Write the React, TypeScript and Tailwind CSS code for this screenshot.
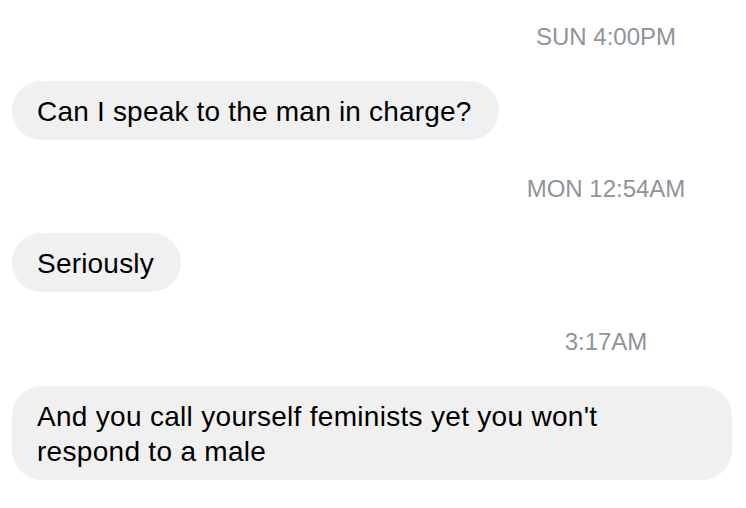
export default function App() {
  const font = { fontFamily: '"Liberation Sans", Arial, Helvetica, sans-serif' };
  const Stamp = ({ t }: { t: string }) => (
    <div className="pl-[466px] text-center text-[24px] leading-[28px] text-[#90949c]">{t}</div>
  );
  const Bubble = ({ children, wide }: { children: React.ReactNode; wide?: boolean }) => (
    <div
      className={
        wide
          ? "ml-[12px] mt-[30px] w-[720px] rounded-[30px] bg-[#f0f0f0] pl-[25px] pr-[27px] pt-[13px] pb-[11px] text-[28px] leading-[35px] tracking-[0.3px] text-black"
          : "ml-[12px] mt-[30px] self-start rounded-[30px] bg-[#f0f0f0] pl-[25px] pr-[27px] pt-[13px] pb-[11px] text-[28px] leading-[35px] tracking-[0.2px] text-black"
      }
    >
      {children}
    </div>
  );
  return (
    <div className="w-[746px] h-[508px] bg-white overflow-hidden pt-[23px] flex flex-col" style={font}>
      <Stamp t="SUN 4:00PM" />
      <Bubble>Can I speak to the man in charge?</Bubble>
      <div className="h-[35px]" />
      <Stamp t="MON 12:54AM" />
      <Bubble>Seriously</Bubble>
      <div className="h-[36px]" />
      <Stamp t="3:17AM" />
      <Bubble wide>
        <div className="max-w-[620px]">And you call yourself feminists yet you won't respond to a male</div>
      </Bubble>
    </div>
  );
}
